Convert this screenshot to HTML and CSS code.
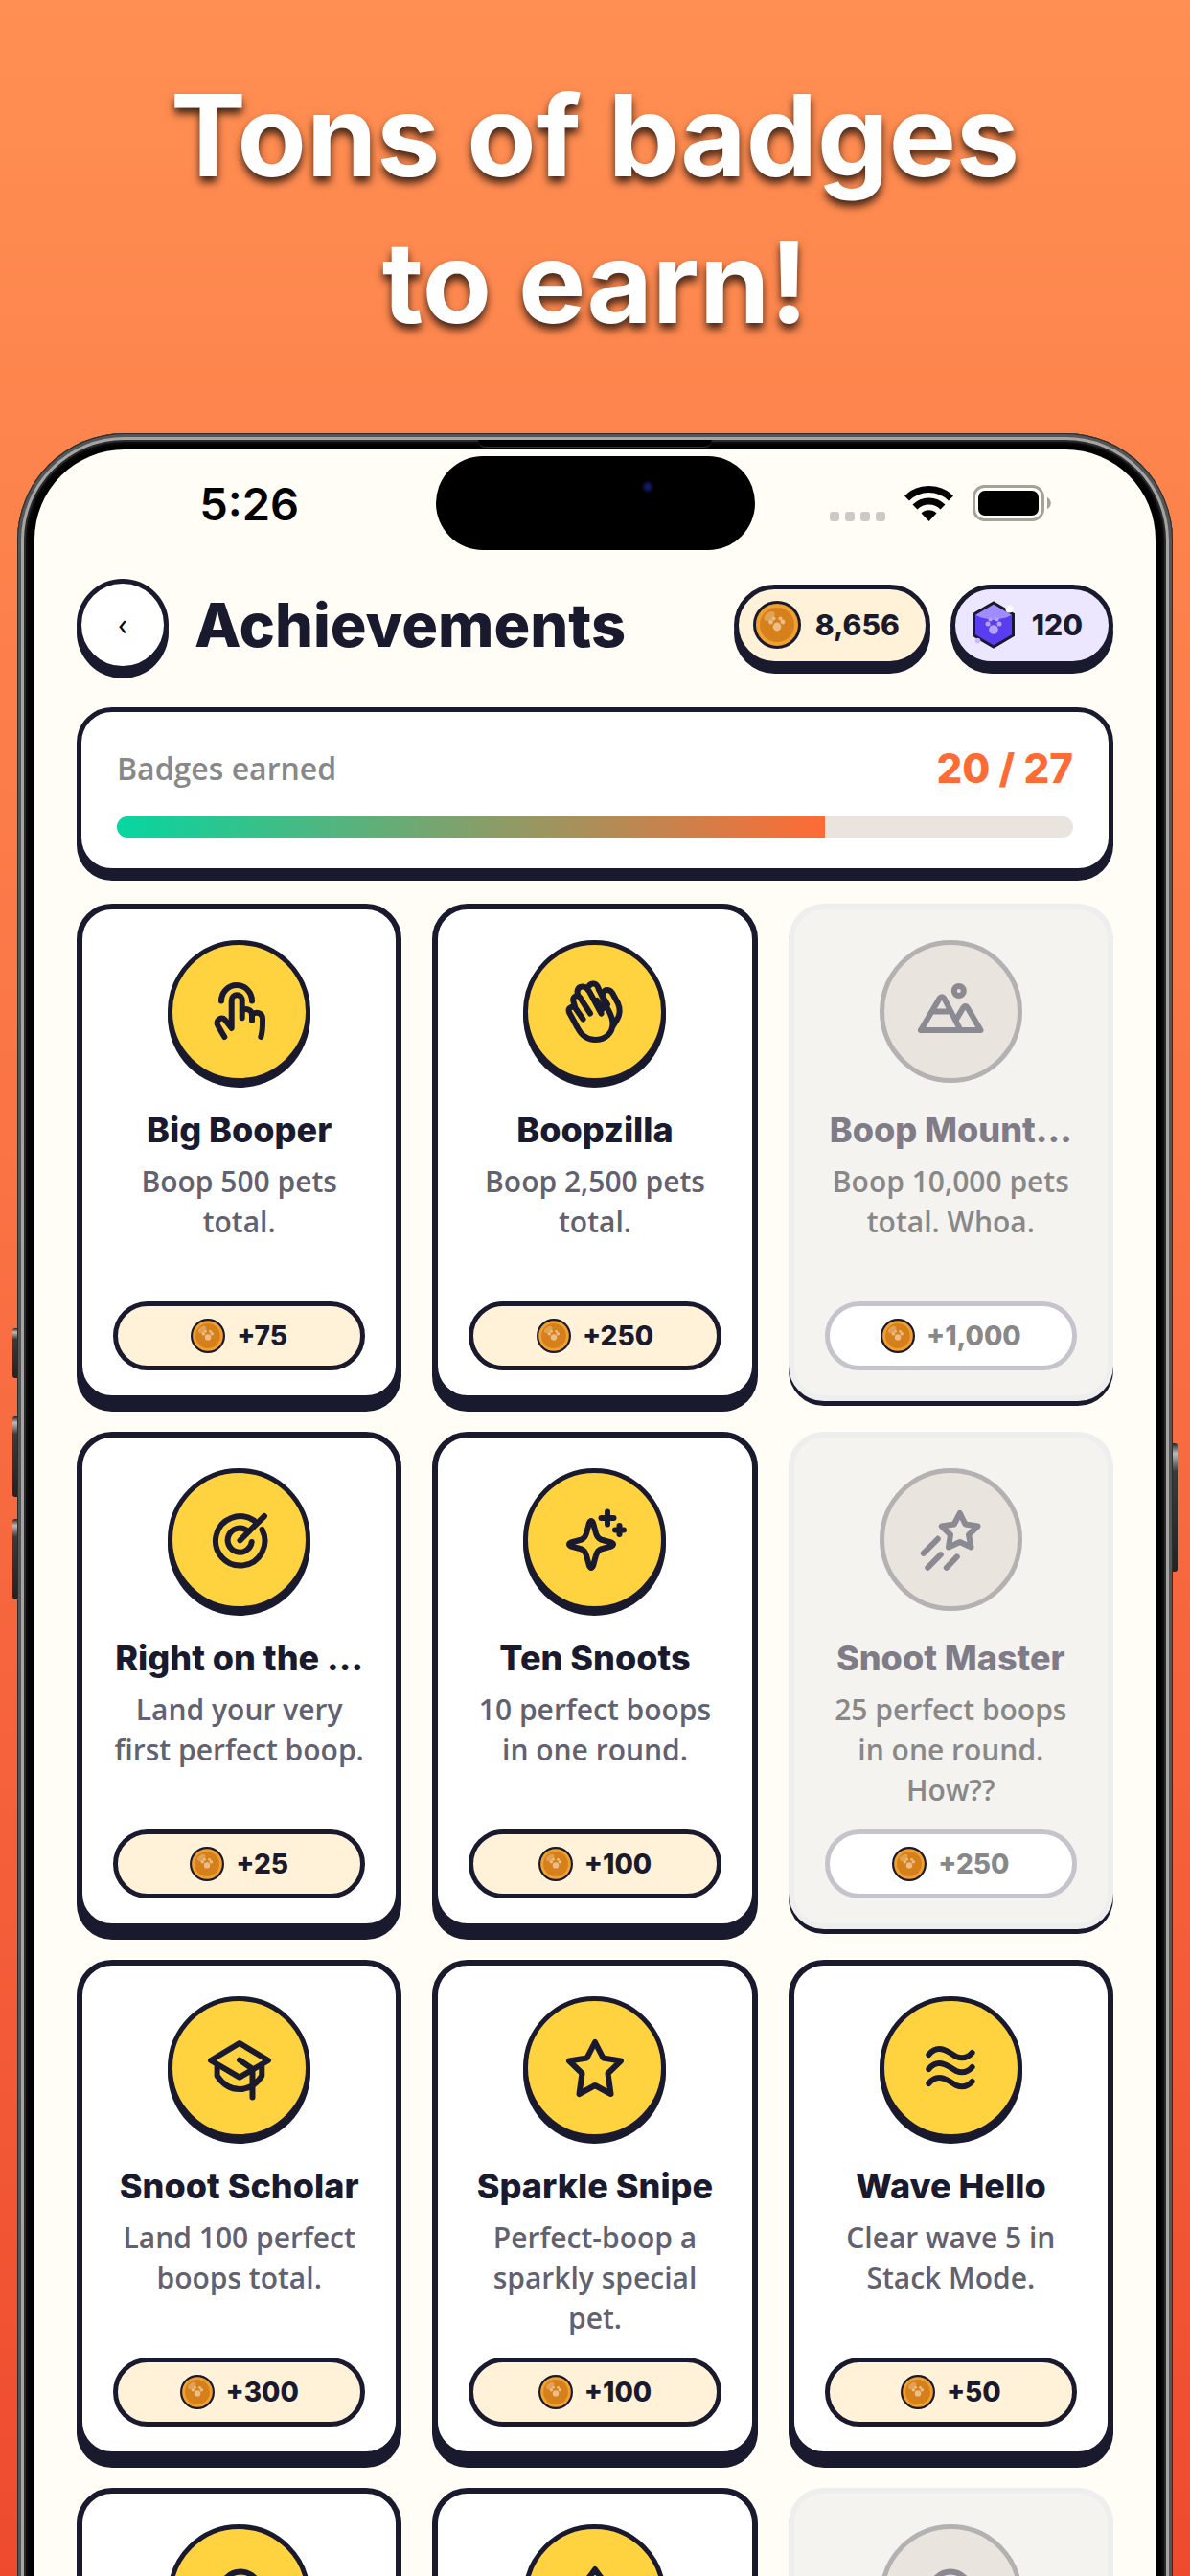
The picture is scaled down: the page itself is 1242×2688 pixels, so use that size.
FILE: index.html
```
<!DOCTYPE html>
<html lang="en">
<head>
  <meta charset="UTF-8">
  <meta name="viewport" content="width=device-width, initial-scale=1.0">
  <title>Achievements</title>
  <link rel="stylesheet" href="styles.css">
</head>
<body>

  <!-- shared coin and gem art -->
  <svg class="sprite" aria-hidden="true">
    <symbol id="coin" viewBox="0 0 50 50">
      <circle cx="25" cy="25" r="23.5" fill="#f0a02e" stroke="#1a1a2e" stroke-width="3"/>
      <circle cx="25" cy="25" r="18" fill="#d6801c"/>
      <ellipse cx="17" cy="16" rx="6.5" ry="4" fill="#e2a052" transform="rotate(-35 17 16)"/>
      <g fill="#ebbd88">
        <circle cx="25" cy="27" r="4.4"/>
        <circle cx="18.500" cy="22" r="2.400"/>
        <circle cx="31" cy="22" r="2.400"/>
        <circle cx="21.500" cy="18.500" r="2"/>
        <circle cx="28.500" cy="18.500" r="2"/>
      </g>
    </symbol>
    <symbol id="gem" viewBox="0 0 50 50">
      <path d="M25 2L45.500 14v22L25 48 4.500 36V14z" fill="#5b3df0"/>
      <path d="M25 2L45.500 14 38 17.500 25 20 12 17.500 4.500 14z" fill="#a08cff"/>
      <path d="M25 2L45.500 14v22L25 48 4.500 36V14z" fill="none" stroke="#1a1a2e" stroke-width="3"/>
      <circle cx="41.500" cy="8.500" r="4" fill="#fff"/>
      <circle cx="8.500" cy="41.500" r="2.800" fill="#c9b8ff"/>
      <g fill="#b5a3fa">
        <circle cx="25" cy="30" r="4.800"/>
        <circle cx="19" cy="24" r="2.500"/>
        <circle cx="31" cy="24" r="2.500"/>
        <circle cx="21.500" cy="19.500" r="2"/>
        <circle cx="28.500" cy="19.500" r="2"/>
      </g>
    </symbol>
  </svg>

  <h1 class="headline">Tons of badges<br>to earn!</h1>

  <div class="phone">
    <span class="side-button action"></span>
    <span class="side-button volume-up"></span>
    <span class="side-button volume-down"></span>
    <span class="side-button power"></span>
    <span class="earpiece"></span>

    <div class="screen">
      <div class="status-bar">
        <span class="time">5:26</span>
        <div class="island"><span class="camera"></span></div>
        <div class="signals">
          <svg width="58" height="38" viewBox="0 0 58 38" fill="#cbcac6">
            <rect x="0" y="28" width="10" height="10" rx="3"/>
            <rect x="16" y="28" width="10" height="10" rx="3"/>
            <rect x="32" y="28" width="10" height="10" rx="3"/>
            <rect x="48" y="28" width="10" height="10" rx="3"/>
          </svg>
          <svg width="51" height="38" viewBox="0 0 51 38" fill="none" stroke="#000" stroke-width="7">
            <path d="M2.500 14a32.500 32.500 0 0 1 46 0"/>
            <path d="M11 23a20.500 20.500 0 0 1 29 0"/>
            <path d="M25.500 38l-8-8.500a11.500 11.500 0 0 1 16 0z" fill="#000" stroke="none"/>
          </svg>
          <svg width="82" height="38" viewBox="0 0 82 38">
            <rect x="1.500" y="1.500" width="72" height="35" rx="11" fill="none" stroke="#a3a29d" stroke-width="3"/>
            <rect x="6" y="6" width="63" height="26" rx="7" fill="#000"/>
            <path d="M78 13c5 2 5 10 0 12z" fill="#a3a29d"/>
          </svg>
        </div>
      </div>

      <header class="top-bar">
        <button class="back" aria-label="Back">‹</button>
        <h2 class="page-title">Achievements</h2>
        <div class="wallet coins"><svg><use href="#coin"/></svg>8,656</div>
        <div class="wallet gems"><svg><use href="#gem"/></svg>120</div>
      </header>

      <section class="progress-card">
        <div class="progress-row">
          <span class="progress-label">Badges earned</span>
          <span class="progress-count">20 / 27</span>
        </div>
        <div class="progress-bar">
          <div class="progress" style="width: 74.07%"></div>
        </div>
      </section>

      <main class="badges">
        <article class="badge">
          <div class="medal">
            <svg viewBox="0 0 64 64"><path d="M13 20.500a16 16.500 0 0 1 32 0M16.300 58L9.300 46c-2.500-5 3.500-10 7.400-6l7 9V19.700a5.500 5.500 0 0 1 11 0v18.600M34.700 31c3.500-4 10.300-1.500 10.300 4v6M45 35c4-4 11-2.500 11 4 0 8 .3 13-1.700 19"/></svg>
          </div>
          <h3>Big Booper</h3>
          <p>Boop 500 pets total.</p>
          <div class="reward"><svg><use href="#coin"/></svg>+75</div>
        </article>

        <article class="badge">
          <div class="medal">
            <svg viewBox="0 0 64 64"><path d="M19.500 39.500L11.500 28A4 4 0 0 0 4.800 32L13.500 48C18 57 24 61 32 61 43 61 50.500 54 50.500 44 50.500 38 48 34 45 28L34.500 5C32 1 27 2 25 6M11.500 28L9.500 21A4 4 0 0 1 16 16.500L27 33.500M15 16C12 10 14 6 18.500 5.500 22 5 24 7 26 10.500L38.500 33.500M34 20l6 9M36 9l9 15M41 12C42 8 47 8 50 12L56 23C58.500 29 58 35 55 40L50 48"/></svg>
          </div>
          <h3>Boopzilla</h3>
          <p>Boop 2,500 pets total.</p>
          <div class="reward"><svg><use href="#coin"/></svg>+250</div>
        </article>

        <article class="badge locked">
          <div class="medal">
            <svg viewBox="0 0 64 64"><path d="M1 51L20.500 18q2.500-3.500 5 0L42.500 51M1 51H63.500L50 28q-2.500-4-5 0L38.500 39M14.500 31.500H31"/><circle cx="40.800" cy="10" r="5"/></svg>
          </div>
          <h3>Boop Mount...</h3>
          <p>Boop 10,000 pets total. Whoa.</p>
          <div class="reward"><svg><use href="#coin"/></svg>+1,000</div>
        </article>

        <article class="badge">
          <div class="medal">
            <svg viewBox="0 0 64 64"><path d="M55.500 21A25.700 25.700 0 1 1 47 11.500M44.700 34A12.600 12.600 0 1 1 39 21.500M32.500 32.300L58 7"/></svg>
          </div>
          <h3>Right on the ...</h3>
          <p>Land your very first perfect boop.</p>
          <div class="reward"><svg><use href="#coin"/></svg>+25</div>
        </article>

        <article class="badge">
          <div class="medal">
            <svg viewBox="0 0 64 64"><path d="M26 14q2-4 4 0l3 11q1.500 5 5 6.500l11 3q4 2 0 4l-11 3q-3.500 1.500-5 6.500l-3 11q-2 4-4 0l-3-11q-1.500-5-5-6.500l-11-3q-4-2 0-4l11-3q3.500-1.500 5-6.500zM45 2.500v13M38.500 9h13M57.500 17v9M53 21.500h9"/></svg>
          </div>
          <h3>Ten Snoots</h3>
          <p>10 perfect boops in one round.</p>
          <div class="reward"><svg><use href="#coin"/></svg>+100</div>
        </article>

        <article class="badge locked">
          <div class="medal">
            <svg viewBox="0 0 64 64"><path d="M41.800 4l5.700 11.500 13 2-9.500 9 2.500 13-11.700-5.500-11.800 5.500 2-13-9.200-9 13-2zM3.800 45.800l15-15M8.200 60.800l13.600-13.600M27.800 60.800l11-11.400"/></svg>
          </div>
          <h3>Snoot Master</h3>
          <p>25 perfect boops in one round. How??</p>
          <div class="reward"><svg><use href="#coin"/></svg>+250</div>
        </article>

        <article class="badge">
          <div class="medal">
            <svg viewBox="0 0 64 64"><path d="M32 6L62 24 32 41.600 2 24zM8.600 28v12c6 9 14 14 23.400 14s17.500-5 23.300-14V28M32 23.600l13.500 9.200v29.700"/></svg>
          </div>
          <h3>Snoot Scholar</h3>
          <p>Land 100 perfect boops total.</p>
          <div class="reward"><svg><use href="#coin"/></svg>+300</div>
        </article>

        <article class="badge">
          <div class="medal">
            <svg viewBox="0 0 64 64"><path d="M32 5l8.500 16.500 18.500 3-13.500 13L48.500 59 32 50 15.500 59l3-21.500-13.500-13 18.500-3z"/></svg>
          </div>
          <h3>Sparkle Snipe</h3>
          <p>Perfect-boop a sparkly special pet.</p>
          <div class="reward"><svg><use href="#coin"/></svg>+100</div>
        </article>

        <article class="badge">
          <div class="medal">
            <svg viewBox="0 0 64 64"><path d="M9.300 18C20 5 32 17 38 20c7 3 12 1 16.600-4M9.300 33C20 20 32 32 38 35c7 3 12 1 16.600-4M9.300 48C20 35 32 47 38 50c7 3 12 1 16.600-4"/></svg>
          </div>
          <h3>Wave Hello</h3>
          <p>Clear wave 5 in Stack Mode.</p>
          <div class="reward"><svg><use href="#coin"/></svg>+50</div>
        </article>

        <article class="badge">
          <div class="medal">
            <svg viewBox="0 0 64 64"><circle cx="33" cy="27" r="20.500"/></svg>
          </div>
        </article>

        <article class="badge">
          <div class="medal">
            <svg viewBox="0 0 64 64"><path d="M32 4c5 8 18 20 18 34a18 18 0 0 1-36 0C14 24 27 12 32 4z"/></svg>
          </div>
        </article>

        <article class="badge locked">
          <div class="medal">
            <svg viewBox="0 0 64 64"><circle cx="32" cy="27" r="20.500"/></svg>
          </div>
        </article>
      </main>
    </div>
  </div>

</body>
</html>
```
FILE: styles.css
```
* {
  box-sizing: border-box;
}

body {
  margin: 0;
  height: 100vh;
  overflow: hidden;
  background: linear-gradient(to bottom, #ff8f52, #fa7345 45%, #ee4b2e);
  font-family: Inter, "Open Sans", sans-serif;
  color: #1a1a2e;
}

h2, h3, p {
  margin: 0;
}

.sprite {
  display: none;
}

.headline {
  margin: 0;
  padding: 65px 20px 81px;
  font-size: 118px;
  line-height: 153px;
  font-weight: 700;
  text-align: center;
  color: #fff;
  text-shadow: 0 6px 8px rgba(0, 0, 0, 0.75);
}

/* phone frame */
.phone {
  position: relative;
  margin: 0 18px;
  padding: 17px 18px 0;
  border-radius: 112px 112px 0 0;
  background: #000;
  box-shadow:
    inset 0 0 0 1px #2b2b2b,
    inset 0 0 0 4px #555,
    inset 0 0 0 7px #a5a5a5,
    inset 0 0 0 9px #2a2a2a,
    inset 0 0 4px 10px #161616;
}

.side-button {
  position: absolute;
  left: -5px;
  width: 5px;
  border-radius: 3px 0 0 3px;
  background: linear-gradient(#222, #bbb 8%, #3a3a3a 22%, #222);
}

.action {
  top: 934px;
  height: 52px;
}

.volume-up {
  top: 1026px;
  height: 84px;
}

.volume-down {
  top: 1133px;
  height: 84px;
}

.power {
  top: 1054px;
  left: auto;
  right: -5px;
  height: 134px;
  border-radius: 0 3px 3px 0;
}

.earpiece {
  position: absolute;
  top: 7px;
  left: 50%;
  width: 244px;
  height: 8px;
  margin-left: -122px;
  background: #000;
  border-bottom: 1px solid #333;
  border-radius: 0 0 8px 8px;
}

.screen {
  padding: 7px 44px 40px;
  border-radius: 94px 94px 0 0;
  background: #fffdf5;
}

.status-bar {
  display: grid;
  grid-template-columns: 1fr 333px 1fr;
  align-items: center;
  margin: 0 -14px 30px;
}

.time {
  font-size: 47px;
  font-weight: 600;
  text-align: center;
  color: #000;
}

.island {
  position: relative;
  height: 98px;
  border-radius: 49px;
  background: #000;
}

.camera {
  position: absolute;
  top: 26px;
  right: 106px;
  width: 12px;
  height: 12px;
  border-radius: 50%;
  background: radial-gradient(#15208a, #050518 70%);
}

.signals {
  display: flex;
  justify-content: center;
  gap: 20px;
}

/* title row */
.top-bar {
  display: flex;
  align-items: center;
  gap: 21px;
  margin-bottom: 38px;
}

.back {
  width: 96px;
  height: 96px;
  padding: 0 0 4px;
  border: 5px solid #1a1a2e;
  border-radius: 50%;
  background: #fff;
  box-shadow: 0 8px 0 #1a1a2e;
  font-family: "Open Sans", sans-serif;
  font-size: 32px;
  color: #000;
}

.page-title {
  flex: 1;
  padding-left: 6px;
  font-size: 63px;
  font-weight: 800;
}

.wallet {
  display: flex;
  align-items: center;
  gap: 15px;
  height: 85px;
  padding: 0 27px 0 15px;
  border: 5px solid #1a1a2e;
  border-radius: 43px;
  box-shadow: 0 8px 0 #1a1a2e;
  font-size: 30px;
  font-weight: 800;
}

.wallet svg {
  width: 50px;
  height: 50px;
}

.coins {
  background: #fff2d9;
}

.gems {
  background: #ece6ff;
}

/* progress */
.progress-card {
  margin-bottom: 32px;
  padding: 32px 37px;
  border: 5px solid #1a1a2e;
  border-radius: 37px;
  background: #fff;
  box-shadow: 0 8px 0 #1a1a2e;
}

.progress-row {
  display: flex;
  align-items: center;
  justify-content: space-between;
  height: 52px;
  margin-bottom: 25px;
}

.progress-label {
  font-family: "Open Sans", sans-serif;
  font-size: 32px;
  font-weight: 600;
  color: #888;
}

.progress-count {
  font-size: 42px;
  font-weight: 800;
  color: #ff6b35;
}

.progress-bar {
  height: 22px;
  border-radius: 11px;
  background: #e9e4de;
  overflow: hidden;
}

.progress {
  height: 100%;
  background: linear-gradient(to right, #06d6a0, #ff6b35);
}

/* badge grid */
.badges {
  display: grid;
  grid-template-columns: repeat(3, minmax(0, 1fr));
  gap: 32px;
}

.badge {
  display: flex;
  flex-direction: column;
  align-items: center;
  padding: 32px 32px 26px;
  border: 6px solid #1a1a2e;
  border-radius: 37px;
  background: #fff;
  box-shadow: 0 11px 0 #1a1a2e;
  text-align: center;
}

.medal {
  display: flex;
  align-items: center;
  justify-content: center;
  width: 149px;
  height: 149px;
  margin-bottom: 27px;
  border: 5px solid #1a1a2e;
  border-radius: 50%;
  background: #ffd23f;
  box-shadow: 0 5px 0 #1a1a2e;
}

.medal svg {
  width: 64px;
  height: 64px;
  overflow: visible;
  fill: none;
  stroke: #1a1a2e;
  stroke-width: 6;
  stroke-linecap: round;
  stroke-linejoin: round;
}

.badge h3 {
  margin-bottom: 11px;
  font-size: 36px;
  line-height: 44px;
  font-weight: 800;
  white-space: nowrap;
}

.badge p {
  height: 126px;
  margin-bottom: 20px;
  font-family: "Open Sans", sans-serif;
  font-size: 30px;
  line-height: 42px;
  font-weight: 600;
  color: #62616f;
}

.reward {
  display: flex;
  align-items: center;
  justify-content: center;
  gap: 12px;
  align-self: stretch;
  height: 72px;
  border: 5px solid #1a1a2e;
  border-radius: 36px;
  background: #fff2d9;
  font-size: 28px;
  font-weight: 800;
}

.reward svg {
  width: 36px;
  height: 36px;
}

.locked {
  border-color: #eee;
  background: #f4f3ef;
  box-shadow: 0 5px 0 #1a1a2e;
}

.locked .medal {
  border-color: #b3b1b1;
  background: #e9e4de;
  box-shadow: none;
}

.locked .medal svg {
  stroke: #8b8991;
}

.locked h3 {
  color: #7f7c88;
}

.locked p {
  color: #888;
}

.locked .reward {
  border-color: #c5c4cc;
  background: #fff;
  color: #888;
}
```
